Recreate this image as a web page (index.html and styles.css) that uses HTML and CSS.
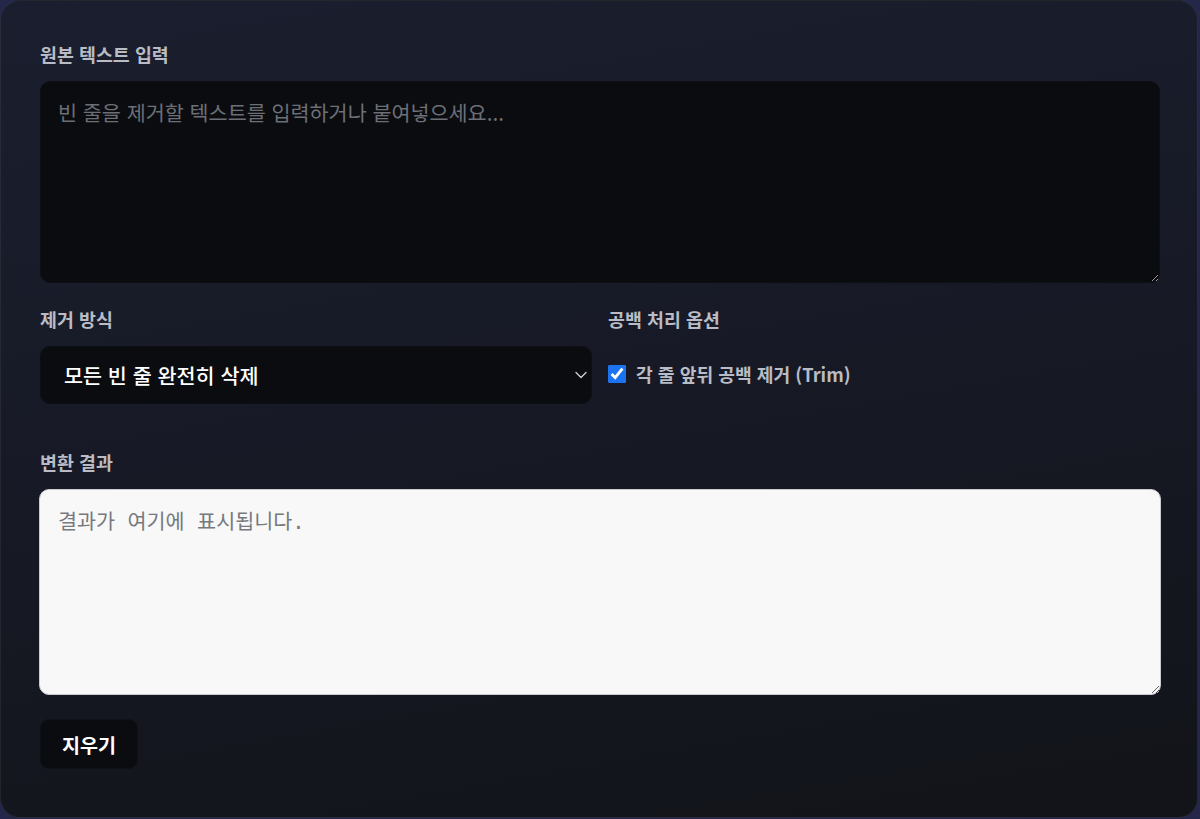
FILE: index.html
```html
<!DOCTYPE html>
<html lang="ko">
<head>
<meta charset="utf-8">
<title>빈 줄 제거</title>
<link rel="stylesheet" href="styles.css">
</head>
<body>
<main class="card">
  <section class="field">
    <label class="label" for="src">원본 텍스트 입력</label>
    <textarea id="src" class="input-area" placeholder="빈 줄을 제거할 텍스트를 입력하거나 붙여넣으세요..."></textarea>
  </section>

  <section class="options">
    <div class="option">
      <label class="label" for="mode">제거 방식</label>
      <div class="select-wrap">
        <select id="mode" class="select">
          <option>모든 빈 줄 완전히 삭제</option>
          <option>연속된 빈 줄을 하나로</option>
        </select>
        <svg class="chevron" viewBox="0 0 12 8" width="12" height="8" aria-hidden="true">
          <path d="M1 1.5 6 6.5 11 1.5" fill="none" stroke="#c9ccd3" stroke-width="1.4" stroke-linecap="round" stroke-linejoin="round"/>
        </svg>
      </div>
    </div>
    <div class="option">
      <span class="label">공백 처리 옵션</span>
      <label class="check">
        <input type="checkbox" checked>
        <span>각 줄 앞뒤 공백 제거 (Trim)</span>
      </label>
    </div>
  </section>

  <section class="field result-field">
    <label class="label" for="out">변환 결과</label>
    <textarea id="out" class="output-area" placeholder="결과가 여기에 표시됩니다." readonly></textarea>
  </section>

  <button class="btn" type="button">지우기</button>
</main>
</body>
</html>
```

FILE: styles.css
```css
* { box-sizing: border-box; }

html, body {
  margin: 0;
  height: 100%;
}

body {
  background: #24274a;
  font-family: "Noto Sans CJK KR", "Noto Sans", sans-serif;
  color: #e6e8ec;
}

.card {
  width: 1198px;
  height: 818px;
  border: 1px solid rgba(255, 255, 255, 0.07);
  border-radius: 20px;
  background: linear-gradient(170deg, #1b1e2e 0%, #171a26 45%, #121419 100%);
  padding: 41px 37px 0 39px;
  display: flex;
  flex-direction: column;
}

.label {
  display: block;
  font-size: 18.4px;
  font-weight: 700;
  line-height: 24px;
  color: #b9bcc4;
  margin-bottom: 15px;
}

.input-area {
  display: block;
  width: 100%;
  height: 202px;
  background: #0b0c10;
  border: 1px solid #0e0f14;
  border-radius: 10px;
  padding: 15px 17px;
  font-family: "Noto Sans CJK KR", "Noto Sans", sans-serif;
  font-size: 20.7px;
  color: #e6e8ec;
  outline: none;
  resize: vertical;
}

.input-area::placeholder { color: #6c6f76; }

.options {
  display: grid;
  grid-template-columns: 1fr 1fr;
  gap: 16px;
  margin-top: 24px;
}

.select-wrap {
  position: relative;
}

.select {
  display: block;
  width: 100%;
  height: 58px;
  appearance: none;
  background: #0b0c10;
  border: 1px solid #0e0f14;
  border-radius: 10px;
  padding: 0 40px 0 23px;
  font-family: "Noto Sans CJK KR", "Noto Sans", sans-serif;
  font-size: 20.7px;
  font-weight: 500;
  color: #ffffff;
  outline: none;
}

.chevron {
  position: absolute;
  right: 5px;
  top: 25px;
  pointer-events: none;
}

.check {
  display: flex;
  align-items: center;
  gap: 10px;
  height: 56px;
  padding-left: 0;
  font-size: 18.2px;
  font-weight: 700;
  color: #b9bcc4;
}

.check input {
  width: 18px;
  height: 18px;
  margin: 0;
  accent-color: #1a73f0;
}

.result-field {
  margin-top: 46px;
}

.output-area {
  display: block;
  width: calc(100% + 2px);
  margin-left: -1px;
  height: 206px;
  background: #f8f8f8;
  border: 1px solid #c9cbd0;
  border-radius: 10px;
  padding: 15px 18px;
  font-family: "DejaVu Sans Mono", "Noto Sans CJK KR", monospace;
  font-size: 20.7px;
  color: #333;
  outline: none;
  resize: vertical;
}

.output-area::placeholder { color: #77797e; }

.btn {
  align-self: flex-start;
  margin-top: 24px;
  height: 50px;
  padding: 0 21px;
  background: #0b0c10;
  border: 1px solid #101116;
  border-radius: 9px;
  font-family: "Noto Sans CJK KR", "Noto Sans", sans-serif;
  font-size: 19.6px;
  font-weight: 700;
  color: #ffffff;
  cursor: pointer;
}
```
